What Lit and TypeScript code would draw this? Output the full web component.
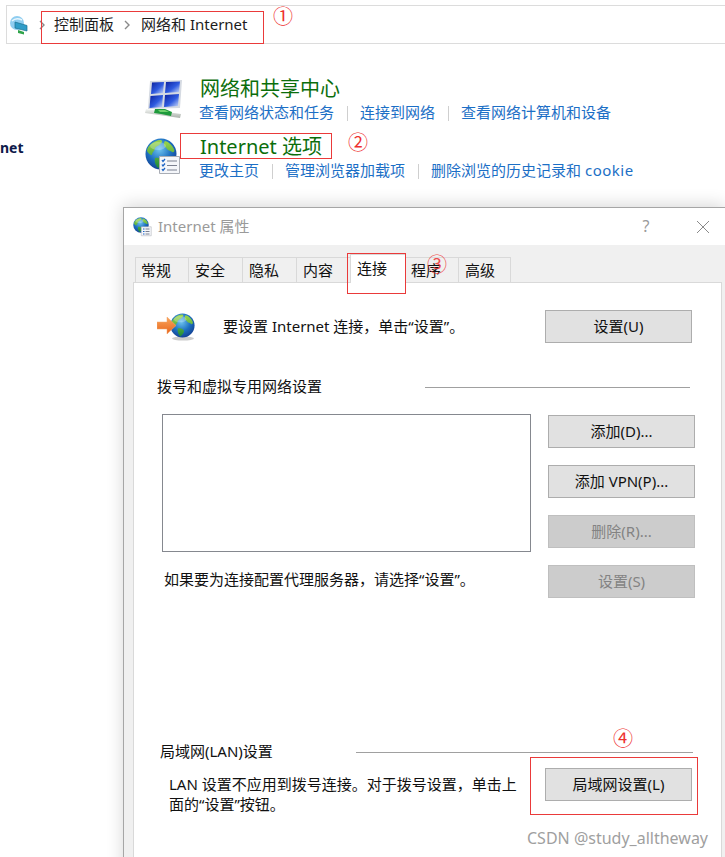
import { LitElement, html, css, svg } from "lit";
import { customElement } from "lit/decorators.js";

const globe = (id: string) => svg`
  <defs>
    <radialGradient id="${id}o" cx="45%" cy="35%" r="70%"><stop offset="0" stop-color="#6fc4ef"/><stop offset=".55" stop-color="#1c6fc0"/><stop offset="1" stop-color="#12398c"/></radialGradient>
    <linearGradient id="${id}l" x1="0" y1="0" x2="0" y2="1"><stop offset="0" stop-color="#9fd84a"/><stop offset="1" stop-color="#1c8a3a"/></linearGradient>
  </defs>
  <circle cx="16" cy="16" r="15.5" fill="url(#${id}o)"/>
  <path fill="url(#${id}l)" d="M5 7c3-3 7-5 11-5 2 1 1 3-1 4-1 2-4 2-5 4 0 3-3 4-3 7-2 0-4-2-5-4 0-2 1-4 3-6zM20 3c4 1 7 4 9 8 1 2 0 4-2 3-2-2-4-1-5-3s-3-2-3-4 0-3 1-4zM10 20c3-1 7 0 8 3 0 3-3 6-5 7-2-2-4-6-3-10z"/>
  <ellipse cx="13" cy="8" rx="8" ry="4" fill="#fff" opacity=".25"/>`;

const netIcon = svg`<svg width="40" height="40" viewBox="0 0 40 40">
  <defs>
    <linearGradient id="pane" x1="0" y1="0" x2="1" y2="1"><stop offset="0" stop-color="#0a1f9c"/><stop offset=".55" stop-color="#2f5be0"/><stop offset="1" stop-color="#d4e0f8"/></linearGradient>
    <linearGradient id="pipe" x1="0" y1="0" x2="0" y2="1"><stop offset="0" stop-color="#f4f6f4"/><stop offset="1" stop-color="#aab0aa"/></linearGradient>
  </defs>
  <path fill="#d5dae2" d="M5 1 37 0 35 28 3 29z"/>
  <path fill="url(#pane)" d="M7 2.500 19 2 18 13 6 14z"/>
  <path fill="url(#pane)" d="M21 2 35 1.500 34 12 20 13z"/>
  <path fill="url(#pane)" d="M5.500 16 18 15 17 27 4.500 28z"/>
  <path fill="url(#pane)" d="M20 15 34 14 33 26 19 27z"/>
  <path fill="url(#pipe)" d="M1 29 36 34 35 38 0 33z"/>
  <path fill="#1f9a3c" d="M10 29 20 29 27 32 26 36 16 34 9 33z"/>
  <path fill="#6fd06c" d="M13 30 20 30 24 32 15 32z"/>
</svg>`;

const optIcon = svg`<svg width="40" height="40" viewBox="0 0 40 40">
  ${globe("g1")}
  <path fill="#f4f6fa" stroke="#a9adb5" d="M14.500 18.500h20v17h-20z"/>
  <path stroke="#1a62c4" stroke-width="1.300" fill="none" d="M17 22l1 1.500 2-2.500M17 26.500l1 1.500 2-2.500M17 31l1 1.500 2-2.500"/>
  <path stroke="#7b8090" stroke-width="1" d="M22 23h10M22 27.500h10M22 32h10"/>
</svg>`;

const titleIcon = svg`<svg class="ti" width="20" height="20" viewBox="0 0 40 40">
  ${globe("g2")}
  <path fill="#f4f6fa" stroke="#a9adb5" d="M16.500 19.500h20v18h-20z"/>
  <path stroke="#1a62c4" stroke-width="2" d="M20 24h3M20 29h3M20 34h3"/>
  <path stroke="#7b8090" stroke-width="2" d="M25 24h8M25 29h8M25 34h8"/>
</svg>`;

const arrowIcon = svg`<svg width="40" height="28" viewBox="0 0 40 28">
  <defs><linearGradient id="ar" x1="0" y1="0" x2="0" y2="1"><stop offset="0" stop-color="#f9a55c"/><stop offset="1" stop-color="#e8651c"/></linearGradient></defs>
  <ellipse cx="26" cy="25.500" rx="11" ry="2" fill="#999" opacity=".5"/>
  <g transform="translate(13 0) scale(.78)">${globe("g3")}</g>
  <path fill="url(#ar)" stroke="#f3a56b" stroke-width=".5" d="M0 9h10V4l9 8.500-9 8.500v-5H0z"/>
</svg>`;

const addrIcon = svg`<svg width="20" height="20" viewBox="0 0 20 20">
  <circle cx="8" cy="8" r="7" fill="#8fcdf0"/>
  <path d="M3 6c3-3 6-3 10-1" stroke="#e8f6fd" stroke-width="1.500" fill="none"/>
  <path fill="#2f9cc8" stroke="#19708f" stroke-width=".7" d="M6 7l12 3.500V16L6 13z"/>
  <path fill="#2fa34a" d="M9 15l6 2v2.500l-6-1.500z"/>
</svg>`;

@customElement("app-root")
export class AppRoot extends LitElement {
  static styles = css`
    :host { display: block; }
    .page {
      position: relative; width: 725px; height: 857px; overflow: hidden; background: #fff; color: #111;
      font-family: "Noto Sans", "Noto Sans CJK SC", sans-serif; font-size: 15px;
    }
    .addr {
      margin: 5px 0 0 6px; height: 39px; box-sizing: border-box;
      border: 1px solid #dcdcdc; border-right: 0;
      display: flex; align-items: center; padding-left: 2px; color: #1c1c1c;
    }
    .addr svg { flex: none; }
    .addr span { margin-bottom: 2px; }
    .chev { flex: none; margin: 0 9px; }
    .addr .first { margin-left: -1px; }
    .addr .second { margin-left: 1px; }
    .side {
      position: absolute; left: 0; top: 138px; font-weight: 700; font-size: 14px; line-height: 20px; color: #0e1a4a;
    }
    .cats { margin: 32px 0 0 146px; display: flex; flex-direction: column; gap: 11px; }
    .cat { display: flex; }
    .cat .ic { width: 54px; flex: none; padding-top: 4px; }
    .cat .ic svg { display: block; margin-left: -1px; }
    .ct { font-size: 20px; line-height: 26px; color: #0b6e0b; }
    .links { display: flex; margin: -1px 0 0 -1px; line-height: 22px; color: #1c6fc6; align-items: center; }
    .sep { width: 1px; height: 15px; background: #cfcfcf; margin: 2px 12px 0 13px; }
    .latin { letter-spacing: .5px; }
    .dialog {
      margin: 26px 0 0 123px; height: 700px; box-sizing: border-box;
      border: 1px solid #a6a6a6; border-right: 0; border-bottom: 0;
      background: #f0f0f0; box-shadow: 0 -2px 16px rgba(0,0,0,.16);
      position: relative;
    }
    .tbar {
      height: 37px; background: #fff; display: flex; align-items: center; padding-left: 9px; color: #9a9a9a; gap: 5px;
    }
    .tbar .name { flex: 1; margin-bottom: 2px; }
    .tbar .help { width: 16px; text-align: center; color: #9a9a9a; font-size: 16px; margin: 0 37px 2px 0; }
    .tbar .close { margin-right: 15px; display: block; }
    .tabs { display: flex; height: 37px; align-items: flex-end; padding-left: 11px; }
    .tab {
      height: 25px; box-sizing: border-box; border: 1px solid #d9d9d9; border-left-width: 0; border-bottom: 0;
      display: flex; align-items: center; padding-left: 6px; width: 54px; line-height: 24px; flex: none;
    }
    .tab:first-child { border-left-width: 1px; padding-left: 5px; }
    .tab.on {
      height: 29px; width: 56px; background: #fff; padding-left: 6px; align-items: flex-start; padding-top: 1px;
      margin-bottom: -1px; position: relative; z-index: 1; border-left-width: 1px; margin-left: -1px;
    }
    .tab.w53 { width: 53px; padding-left: 5px; }
    .tab.w52 { width: 52px; }
    .panel {
      margin: 0 3px 0 9px; height: 620px; box-sizing: border-box; background: #fff;
      border: 1px solid #d9d9d9; border-bottom: 0; position: relative;
    }
    .row1 { display: flex; align-items: center; height: 33px; margin: 27px 29px 0 23px; }
    .row1 .txt { margin: 0 0 2px 26px; flex: 1; white-space: nowrap; }
    .btn {
      width: 147px; height: 33px; box-sizing: border-box; flex: none;
      background: #e1e1e1; border: 1px solid #adadad; padding-bottom: 2px;
      display: flex; align-items: center; justify-content: center; color: #111; white-space: nowrap;
    }
    .btn.off { background: #cccccc; border-color: #bfbfbf; color: #838383; }
    .hd { display: flex; align-items: center; height: 20px; white-space: nowrap; }
    .hd span { margin-bottom: 4px; }
    .hd i { display: block; height: 1px; background: #a0a0a0; }
    .hd1 { margin: 34px 0 0 23px; }
    .hd1 i { margin-left: 103px; width: 265px; }
    .mid { display: flex; gap: 17px; margin: 17px 0 0 28px; }
    .left { width: 369px; flex: none; }
    .list { height: 138px; box-sizing: border-box; border: 1px solid #85888f; background: #fff; }
    .stack { display: flex; flex-direction: column; gap: 17px; padding-top: 1px; }
    .proxy { padding: 17px 0 0 2px; line-height: 20px; white-space: nowrap; }
    .hd2 { margin: 144px 0 0 26px; }
    .hd2 i { margin-left: 83px; width: 337px; }
    .lan { display: flex; margin: 6px 0 0 35px; }
    .lan .t { width: 351px; line-height: 20px; padding-top: 6px; flex: none; }
    .lan .btn { margin-left: 25px; }
    .box { position: absolute; border: 1px solid #ea3a3a; box-sizing: border-box; pointer-events: none; z-index: 3; }
    .num { position: absolute; color: #ee3030; font-size: 20px; line-height: 24px; width: 24px; text-align: center; z-index: 4; font-family: "Noto Sans CJK SC", sans-serif; }
    .wm { position: absolute; left: 527px; top: 827px; font-size: 16px; line-height: 22px; color: #8f8f8f; opacity: .85; z-index: 4; }
    .b1 { left: 41px; top: 11px; width: 223px; height: 33px; }
    .b2 { left: 180px; top: 133px; width: 152px; height: 26px; }
    .b3 { left: 347px; top: 253px; width: 59px; height: 41px; }
    .b4 { left: 530px; top: 757px; width: 168px; height: 58px; }
    .n1 { left: 271px; top: 4px; }
    .n2 { left: 346px; top: 130px; }
    .n3 { left: 425px; top: 252px; opacity: .85; }
    .n4 { left: 611px; top: 726px; }
  `;

  render() {
    const chev = html`<svg class="chev" width="8" height="10" viewBox="0 0 8 10"><path d="M2 1l4 4-4 4" fill="none" stroke="#8a8a8a" stroke-width="1.400"/></svg>`;
    const sep = html`<span class="sep"></span>`;
    return html`<div class="page">
      <div class="addr">
        ${addrIcon}${chev}
        <span class="first">控制面板</span>${chev}<span class="second">网络和 Internet</span>
      </div>
      <div class="side">net</div>
      <div class="cats">
        <div class="cat">
          <div class="ic">${netIcon}</div>
          <div>
            <div class="ct">网络和共享中心</div>
            <div class="links"><span>查看网络状态和任务</span>${sep}<span>连接到网络</span>${sep}<span>查看网络计算机和设备</span></div>
          </div>
        </div>
        <div class="cat">
          <div class="ic">${optIcon}</div>
          <div>
            <div class="ct">Internet 选项</div>
            <div class="links"><span>更改主页</span>${sep}<span>管理浏览器加载项</span>${sep}<span>删除浏览的历史记录和 <span class="latin">cookie</span></span></div>
          </div>
        </div>
      </div>
      <div class="dialog">
        <div class="tbar">
          ${titleIcon}<span class="name">Internet 属性</span>
          <span class="help">?</span>
          <svg class="close" width="14" height="14" viewBox="0 0 14 14"><path d="M1 1l12 12M13 1L1 13" stroke="#8a8a8a" stroke-width="1" fill="none"/></svg>
        </div>
        <div class="tabs">
          <div class="tab">常规</div><div class="tab">安全</div><div class="tab">隐私</div><div class="tab">内容</div>
          <div class="tab on">连接</div><div class="tab w53">程序</div><div class="tab w52">高级</div>
        </div>
        <div class="panel">
          <div class="row1">
            ${arrowIcon}
            <span class="txt">要设置 Internet 连接，单击“设置”。</span>
            <div class="btn">设置(U)</div>
          </div>
          <div class="hd hd1"><span>拨号和虚拟专用网络设置</span><i></i></div>
          <div class="mid">
            <div class="left">
              <div class="list"></div>
              <div class="proxy">如果要为连接配置代理服务器，请选择“设置”。</div>
            </div>
            <div class="stack">
              <div class="btn">添加(D)...</div>
              <div class="btn">添加 VPN(P)...</div>
              <div class="btn off">删除(R)...</div>
              <div class="btn off">设置(S)</div>
            </div>
          </div>
          <div class="hd hd2"><span>局域网(LAN)设置</span><i></i></div>
          <div class="lan">
            <div class="t">LAN 设置不应用到拨号连接。对于拨号设置，单击上面的“设置”按钮。</div>
            <div class="btn">局域网设置(L)</div>
          </div>
        </div>
      </div>
      <div class="box b1"></div><div class="box b2"></div><div class="box b3"></div><div class="box b4"></div>
      <div class="num n1">①</div><div class="num n2">②</div><div class="num n3">③</div><div class="num n4">④</div>
      <div class="wm">CSDN @study_alltheway</div>
    </div>`;
  }
}
